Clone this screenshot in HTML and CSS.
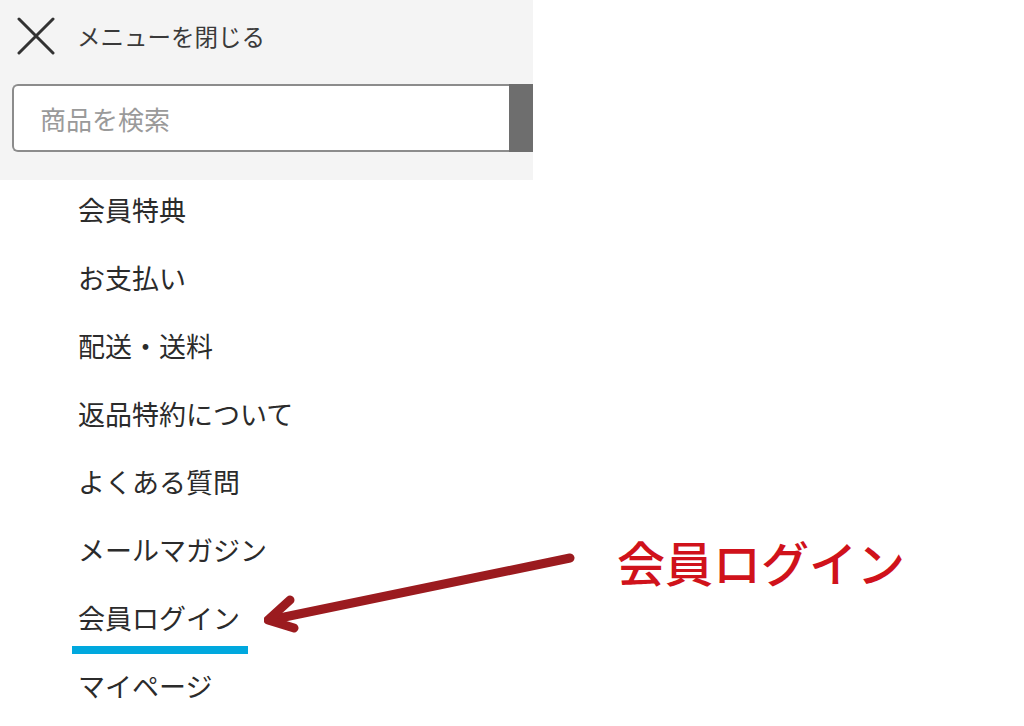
FILE: index.html
```html
<!DOCTYPE html>
<html>
<head>
  <title>メニュー</title>
  <link rel="stylesheet" href="styles.css">
</head>
<body>
  <div id="page">
    <div id="drawer">
      <div class="drawer-head">
        <div class="close-row">
          <svg class="close-icon" width="38" height="38" viewBox="0 0 38 38">
            <path d="M2 2 L36 36 M36 2 L2 36" stroke="#333" stroke-width="3" fill="none" stroke-linecap="round"/>
          </svg>
          <span class="close-label">メニューを閉じる</span>
        </div>
        <div class="search-row">
          <input type="text" class="search-input" placeholder="商品を検索">
          <button class="search-button"></button>
        </div>
      </div>

      <ul class="menu">
        <li><a href="#">会員特典</a></li>
        <li><a href="#">お支払い</a></li>
        <li><a href="#">配送・送料</a></li>
        <li><a href="#">返品特約について</a></li>
        <li><a href="#">よくある質問</a></li>
        <li><a href="#">メールマガジン</a></li>
        <li><a href="#" class="marked">会員ログイン</a></li>
        <li><a href="#">マイページ</a></li>
      </ul>
    </div>

    <svg class="callout-arrow" width="320" height="90" viewBox="0 0 320 90">
      <path d="M306 12 L6 74" stroke="#9b1b1f" stroke-width="9" fill="none" stroke-linecap="round"/>
      <path d="M26 54 L4 74 L30 82" stroke="#9b1b1f" stroke-width="9" fill="none" stroke-linecap="round" stroke-linejoin="round"/>
    </svg>
    <div class="callout-label">会員ログイン</div>
  </div>
</body>
</html>
```

FILE: styles.css
```css
body {
  margin: 0;
  background: #fff;
  font-family: "Noto Sans CJK JP", "Noto Sans", sans-serif;
  color: #2b2b2b;
}
#page {
  position: relative;
  width: 1024px;
  height: 726px;
  overflow: hidden;
}
#drawer {
  width: 533px;
}
.drawer-head {
  background: #f4f4f4;
  padding: 17px 0 28px 0;
  overflow: hidden;
}
.close-row {
  display: flex;
  align-items: center;
  padding-left: 17px;
  gap: 22px;
  height: 38px;
}
.close-icon {
  display: block;
}
.close-label {
  font-size: 23.5px;
  color: #3a3a3a;
}
.search-row {
  display: flex;
  margin: 29px 0 0 12px;
  height: 68px;
}
.search-input {
  flex: 1;
  box-sizing: border-box;
  height: 68px;
  border: 2px solid #8c8c8c;
  border-right: none;
  border-radius: 6px 0 0 6px;
  background: #fff;
  padding: 0 0 0 26px;
  font-family: "Noto Sans CJK JP", sans-serif;
  font-size: 26px;
  outline: none;
}
.search-input::placeholder {
  color: #9a9a9a;
}
.search-button {
  width: 24px;
  height: 68px;
  border: none;
  background: #6e6e6e;
  padding: 0;
}
.menu {
  list-style: none;
  margin: 0;
  padding: 0 0 0 78px;
}
.menu li {
  height: 68px;
}
.menu a {
  display: inline-block;
  position: relative;
  margin-top: 10px;
  font-size: 27px;
  line-height: 40px;
  color: #2b2b2b;
  text-decoration: none;
}
.menu a.marked::after {
  content: "";
  position: absolute;
  left: -6px;
  right: -8px;
  bottom: -16px;
  height: 8px;
  background: #00a8de;
}
.callout-arrow {
  position: absolute;
  left: 264px;
  top: 546px;
}
.callout-label {
  position: absolute;
  left: 617px;
  top: 528px;
  font-size: 48px;
  font-weight: 500;
  line-height: 66px;
  color: #d0121b;
}
```
